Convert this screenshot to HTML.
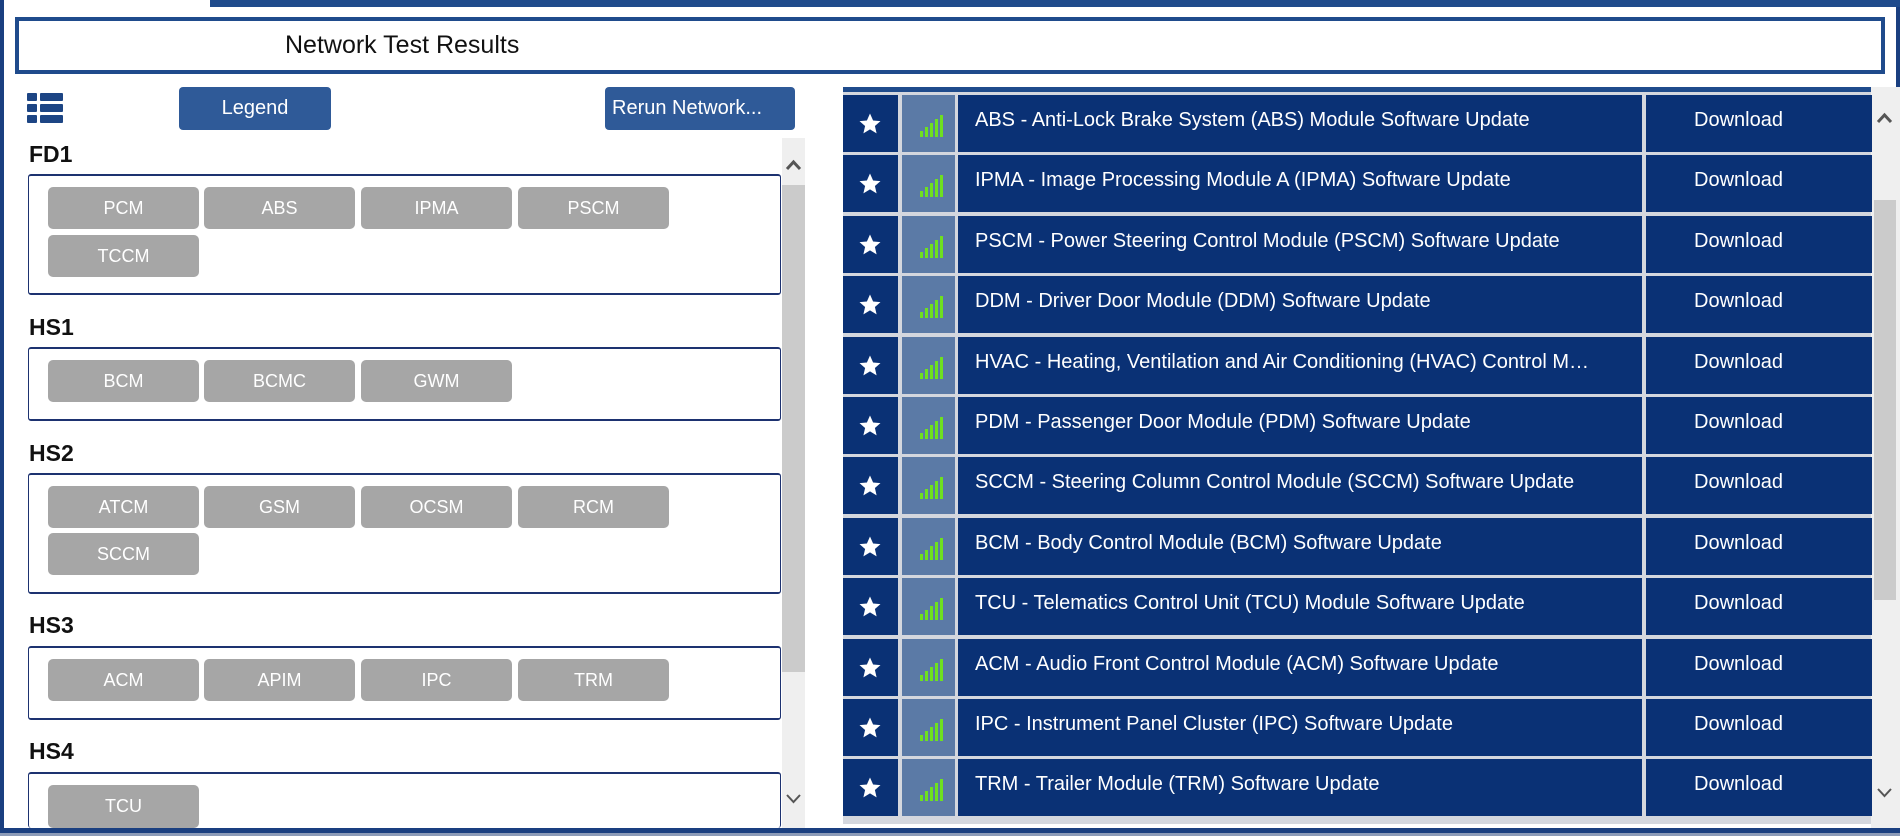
<!DOCTYPE html>
<html><head><meta charset="utf-8">
<style>
*{margin:0;padding:0;box-sizing:border-box}
html{width:1900px;height:836px;overflow:hidden}
body{width:1900px;height:836px;overflow:hidden;background:#fff;font-family:"Liberation Sans",Arial,sans-serif;position:relative}
.a{position:absolute}
.btn{position:absolute;width:151px;height:42px;background:#a6a6a6;border-radius:5px;color:#fff;font-size:18px;text-align:center;line-height:42px}
.lbl{position:absolute;left:29px;font-weight:bold;font-size:23px;color:#111}
.box{position:absolute;left:28px;width:753px;border:1px solid #1d3270;border-top:2px solid #1d3270;border-bottom:2px solid #1d3270;border-radius:3px}
.row{position:absolute;left:843px;height:57px;width:1029px}
.c{position:absolute;top:0;height:57px;background:#0a3175}
.star{left:0;width:55px}
.sig{left:59px;width:53px;background:#5b7aa6}
.txt{left:115px;width:684px;color:#fff;font-size:20px;line-height:50px;padding-left:17px;white-space:nowrap;overflow:hidden}
.dl{left:803px;width:226px;color:#fff;font-size:20px;line-height:50px;padding-left:48px}
.bars{position:absolute;left:18px;top:20px;width:28px;height:22px}
.bars i{position:absolute;bottom:0;width:3px;background:#6ee020}
</style></head><body>
<div class="a" style="left:0;top:0;width:4px;height:836px;background:#1a3f80"></div>
<div class="a" style="left:1896px;top:0;width:4px;height:836px;background:#1a3f80"></div>
<div class="a" style="left:210px;top:0;width:1690px;height:7px;background:#1f4b8c"></div>
<div class="a" style="left:15px;top:17px;width:1870px;height:57px;border:4px solid #1f4b8c;background:#fff"></div>
<div class="a" style="left:285px;top:31px;font-size:25px;color:#111">Network Test Results</div>

<div class="a" style="left:27px;top:93px;width:10px;height:8px;background:#1d4584;border-radius:1px"></div>
<div class="a" style="left:40px;top:93px;width:23px;height:8px;background:#1d4584;border-radius:1px"></div>
<div class="a" style="left:27px;top:104px;width:10px;height:8px;background:#1d4584;border-radius:1px"></div>
<div class="a" style="left:40px;top:104px;width:23px;height:8px;background:#1d4584;border-radius:1px"></div>
<div class="a" style="left:27px;top:115px;width:10px;height:8px;background:#1d4584;border-radius:1px"></div>
<div class="a" style="left:40px;top:115px;width:23px;height:8px;background:#1d4584;border-radius:1px"></div>

<div class="a" style="left:179px;top:87px;width:152px;height:43px;background:#2f5a98;border-radius:4px;color:#fff;font-size:20px;text-align:center;line-height:43px">Legend</div>
<div class="a" style="left:605px;top:87px;width:190px;height:43px;background:#2f5a98;border-radius:4px;color:#fff;font-size:20px;line-height:43px;padding-left:7px;white-space:nowrap">Rerun Network...</div>

<div class="a" style="left:782px;top:138px;width:23px;height:690px;background:#efefef"></div>
<div class="a" style="left:782px;top:185px;width:23px;height:487px;background:#cbcbcb"></div>
<svg class="a" style="left:785px;top:158px" width="17" height="14"><path d="M2 11 L8.5 4 L15 11" stroke="#555" stroke-width="3" fill="none"/></svg>
<svg class="a" style="left:785px;top:792px" width="17" height="14"><path d="M2 3 L8.5 10 L15 3" stroke="#555" stroke-width="2" fill="none"/></svg>

<div class="lbl" style="top:141px">FD1</div>
<div class="box" style="top:174px;height:121px"></div>
<div class="btn" style="left:48px;top:187px">PCM</div>
<div class="btn" style="left:204px;top:187px">ABS</div>
<div class="btn" style="left:361px;top:187px">IPMA</div>
<div class="btn" style="left:518px;top:187px">PSCM</div>
<div class="btn" style="left:48px;top:235px">TCCM</div>

<div class="lbl" style="top:314px">HS1</div>
<div class="box" style="top:347px;height:74px"></div>
<div class="btn" style="left:48px;top:360px">BCM</div>
<div class="btn" style="left:204px;top:360px">BCMC</div>
<div class="btn" style="left:361px;top:360px">GWM</div>

<div class="lbl" style="top:440px">HS2</div>
<div class="box" style="top:473px;height:121px"></div>
<div class="btn" style="left:48px;top:486px">ATCM</div>
<div class="btn" style="left:204px;top:486px">GSM</div>
<div class="btn" style="left:361px;top:486px">OCSM</div>
<div class="btn" style="left:518px;top:486px">RCM</div>
<div class="btn" style="left:48px;top:533px">SCCM</div>

<div class="lbl" style="top:612px">HS3</div>
<div class="box" style="top:646px;height:74px"></div>
<div class="btn" style="left:48px;top:659px">ACM</div>
<div class="btn" style="left:204px;top:659px">APIM</div>
<div class="btn" style="left:361px;top:659px">IPC</div>
<div class="btn" style="left:518px;top:659px">TRM</div>

<div class="lbl" style="top:738px">HS4</div>
<div class="box" style="top:772px;height:56px;border-bottom:none"></div>
<div class="btn" style="left:48px;top:785px;height:43px">TCU</div>

<div class="a" style="left:843px;top:87px;width:1029px;height:5px;background:#1f4b8c"></div>
<div class="a" style="left:843px;top:92px;width:1029px;height:732px;background:#d4d7de"></div>
<div class="a" style="left:1871px;top:87px;width:29px;height:741px;background:#efefef"></div>
<div class="a" style="left:1874px;top:200px;width:22px;height:400px;background:#cbcbcb"></div>
<svg class="a" style="left:1876px;top:111px" width="17" height="14"><path d="M2 11 L8.5 4 L15 11" stroke="#555" stroke-width="3" fill="none"/></svg>
<svg class="a" style="left:1876px;top:786px" width="17" height="14"><path d="M2 3 L8.5 10 L15 3" stroke="#555" stroke-width="2" fill="none"/></svg>

<div id="rows"></div>
<script>
var t=["ABS - Anti-Lock Brake System (ABS) Module Software Update","IPMA - Image Processing Module A (IPMA) Software Update","PSCM - Power Steering Control Module (PSCM) Software Update","DDM - Driver Door Module (DDM) Software Update","HVAC - Heating, Ventilation and Air Conditioning (HVAC) Control M\u2026","PDM - Passenger Door Module (PDM) Software Update","SCCM - Steering Column Control Module (SCCM) Software Update","BCM - Body Control Module (BCM) Software Update","TCU - Telematics Control Unit (TCU) Module Software Update","ACM - Audio Front Control Module (ACM) Software Update","IPC - Instrument Panel Cluster (IPC) Software Update","TRM - Trailer Module (TRM) Software Update"];
var h="";
for(var i=0;i<12;i++){var y=Math.round(95+i*60.4);
h+='<div class="row" style="top:'+y+'px"><div class="c star"><svg style="position:absolute;left:15px;top:17px" width="24" height="24" viewBox="0 0 24 24"><path d="M12 1.5l3.1 7 7.4.6-5.6 4.9 1.7 7.4L12 17.4 5.4 21.4l1.7-7.4L1.5 9.1l7.4-.6z" fill="#fff"/></svg></div><div class="c sig"><div class="bars"><i style="left:0;height:6px"></i><i style="left:5px;height:10px"></i><i style="left:10px;height:14px"></i><i style="left:15px;height:18px"></i><i style="left:20px;height:22px"></i></div></div><div class="c txt">'+t[i]+'</div><div class="c dl">Download</div></div>';}
document.getElementById("rows").innerHTML=h;
</script>

<div class="a" style="left:0;top:828px;width:1900px;height:5px;background:#1a3f80"></div>
<div class="a" style="left:0;top:833px;width:1900px;height:3px;background:#8c9bb8"></div>
</body></html>
